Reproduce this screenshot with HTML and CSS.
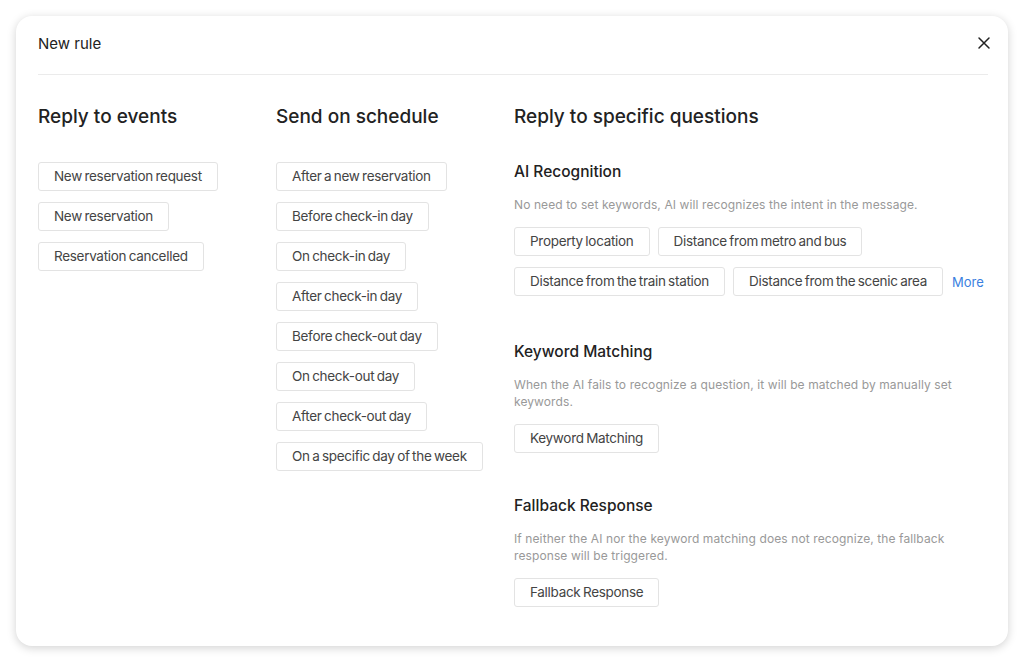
FILE: index.html
```html
<!DOCTYPE html>
<html lang="en">
<head>
    <meta charset="UTF-8">
    <meta name="viewport" content="width=device-width, initial-scale=1.0">
    <title>New rule</title>
    <link rel="stylesheet" href="styles.css">
</head>
<body>
    <div class="modal">
        <div class="modal-header">
            <span class="modal-title">New rule</span>
            <button class="close-btn" aria-label="Close">
                <svg width="14" height="14" viewBox="0 0 14 14"><path d="M2 2L12 12M12 2L2 12" stroke="#222" stroke-width="1.5" stroke-linecap="round"/></svg>
            </button>
        </div>

        <div class="columns">
            <div class="column">
                <h2>Reply to events</h2>
                <div class="chip-list">
                    <span class="chip">New reservation request</span>
                    <span class="chip">New reservation</span>
                    <span class="chip">Reservation cancelled</span>
                </div>
            </div>

            <div class="column">
                <h2>Send on schedule</h2>
                <div class="chip-list">
                    <span class="chip">After a new reservation</span>
                    <span class="chip">Before check-in day</span>
                    <span class="chip">On check-in day</span>
                    <span class="chip">After check-in day</span>
                    <span class="chip">Before check-out day</span>
                    <span class="chip">On check-out day</span>
                    <span class="chip">After check-out day</span>
                    <span class="chip">On a specific day of the week</span>
                </div>
            </div>

            <div class="column column-wide">
                <h2>Reply to specific questions</h2>

                <div class="section">
                    <h3>AI Recognition</h3>
                    <p class="desc">No need to set keywords, AI will recognizes the intent in the message.</p>
                    <div class="chip-wrap">
                        <span class="chip">Property location</span>
                        <span class="chip">Distance from metro and bus</span>
                        <span class="chip">Distance from the train station</span>
                        <span class="chip">Distance from the scenic area</span>
                        <a class="more" href="#">More</a>
                    </div>
                </div>

                <div class="section section-tight">
                    <h3>Keyword Matching</h3>
                    <p class="desc">When the AI fails to recognize a question, it will be matched by manually set keywords.</p>
                    <div class="chip-wrap">
                        <span class="chip">Keyword Matching</span>
                    </div>
                </div>

                <div class="section">
                    <h3>Fallback Response</h3>
                    <p class="desc">If neither the AI nor the keyword matching does not recognize, the fallback response will be triggered.</p>
                    <div class="chip-wrap">
                        <span class="chip">Fallback Response</span>
                    </div>
                </div>
            </div>
        </div>
    </div>
</body>
</html>
```

FILE: styles.css
```css
/* Global Styles */
body {
    font-family: 'Inter', 'Noto Sans', sans-serif;
    background-color: #ffffff;
    margin: 0;
    padding: 16px;
    color: #222;
}

.modal {
    width: 992px;
    height: 630px;
    box-sizing: border-box;
    background-color: #ffffff;
    border-radius: 16px;
    box-shadow: 0 2px 10px rgba(0, 0, 0, 0.18);
    padding: 0 20px 0 22px;
}

.modal-header {
    display: flex;
    justify-content: space-between;
    align-items: center;
    height: 54px;
    padding-bottom: 4px;
    border-bottom: 1px solid #ebebeb;
}

.modal-title {
    font-size: 15px;
    color: #222;
}

.close-btn {
    background: none;
    border: none;
    padding: 0;
    margin-right: -3px;
    display: flex;
    cursor: pointer;
}

.columns {
    display: flex;
    padding-top: 28px;
}

.column {
    width: 238px;
    flex-shrink: 0;
}

.column-wide {
    width: 474px;
}

h2 {
    font-size: 19px;
    font-weight: 500;
    margin: 0 0 31px;
    line-height: 28px;
    color: #222;
}

.column-wide h2 {
    margin-bottom: 29px;
}

h3 {
    font-size: 15.5px;
    font-weight: 500;
    margin: 0 0 12px;
    line-height: 24px;
    color: #222;
}

.chip-list {
    display: flex;
    flex-direction: column;
    align-items: flex-start;
    gap: 11px;
}

.chip-wrap {
    display: flex;
    flex-wrap: wrap;
    align-items: center;
    gap: 11px 8px;
}

.chip {
    display: inline-block;
    box-sizing: border-box;
    height: 29px;
    line-height: 27px;
    padding: 0 15px;
    border: 1px solid #e3e3e3;
    border-radius: 3px;
    font-size: 13.5px;
    letter-spacing: -0.3px;
    word-spacing: -1px;
    color: #444;
    background-color: #fff;
    white-space: nowrap;
}

.more {
    color: #3b7fe0;
    font-size: 13px;
    text-decoration: none;
    margin-left: 1px;
}

.section {
    margin-bottom: 44px;
}

.section-tight {
    margin-bottom: 41px;
}

.desc {
    font-size: 12px;
    line-height: 17px;
    color: #999;
    margin: 0 0 14px;
    letter-spacing: 0.1px;
}
```
